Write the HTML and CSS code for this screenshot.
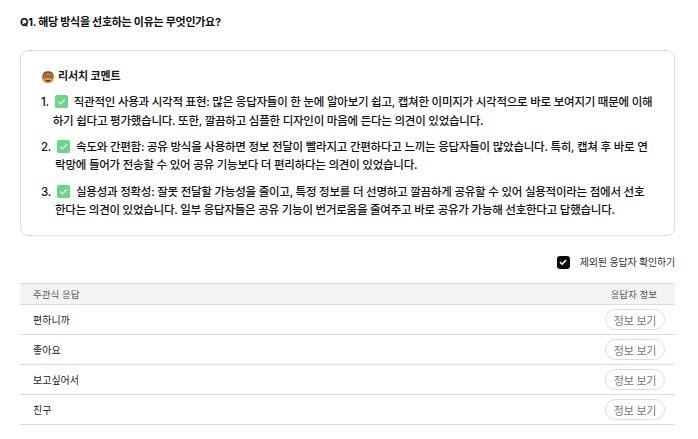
FILE: index.html
```html
<!DOCTYPE html>
<html lang="ko">
<head>
<meta charset="utf-8">
<title>리서치 코멘트</title>
<link rel="stylesheet" href="styles.css">
</head>
<body>
<main class="page">
  <h2 class="question">Q1. 해당 방식을 선호하는 이유는 무엇인가요?</h2>
  <section class="card">
    <h3 class="card-title">
      <svg class="face" viewBox="0 0 16 16" width="14" height="14" aria-hidden="true">
        <circle cx="8" cy="8.5" r="7" fill="#ee9f3e"/>
        <path d="M2 5 Q3 1.5 8 1.5 Q13 1.5 14 5 L12 3.8 H4 Z" fill="#7a5228"/>
        <circle cx="4.8" cy="7" r="2.4" fill="#f6e7cf" stroke="#33261a" stroke-width="1"/>
        <circle cx="11.2" cy="7" r="2.4" fill="#f6e7cf" stroke="#33261a" stroke-width="1"/>
        <path d="M7.2 7 H8.8" stroke="#33261a" stroke-width="1"/>
        <circle cx="4.8" cy="7" r="1" fill="#222"/>
        <circle cx="11.2" cy="7" r="1" fill="#222"/>
        <path d="M4 12.6 Q8 10 12 12.6 Q8 14.2 4 12.6 Z" fill="#4d2f17"/>
      </svg>
      리서치 코멘트
    </h3>
    <ol class="comments">
      <li><span class="num">1.</span><div class="text"><svg class="check" viewBox="0 0 14 14" width="13" height="13" aria-hidden="true"><rect width="14" height="14" rx="2" fill="#6ad68a"/><path d="M3.5 7.2 L6 9.6 L10.5 4.8" fill="none" stroke="#fff" stroke-width="1.3"/></svg>직관적인 사용과 시각적 표현: 많은 응답자들이 한 눈에 알아보기 쉽고, 캡쳐한 이미지가 시각적으로 바로 보여지기 때문에 이해하기 쉽다고 평가했습니다. 또한, 깔끔하고 심플한 디자인이 마음에 든다는 의견이 있었습니다.</div></li>
      <li><span class="num">2.</span><div class="text"><svg class="check" viewBox="0 0 14 14" width="13" height="13" aria-hidden="true"><rect width="14" height="14" rx="2" fill="#6ad68a"/><path d="M3.5 7.2 L6 9.6 L10.5 4.8" fill="none" stroke="#fff" stroke-width="1.3"/></svg>속도와 간편함: 공유 방식을 사용하면 정보 전달이 빨라지고 간편하다고 느끼는 응답자들이 많았습니다. 특히, 캡쳐 후 바로 연락망에 들어가 전송할 수 있어 공유 기능보다 더 편리하다는 의견이 있었습니다.</div></li>
      <li><span class="num">3.</span><div class="text"><svg class="check" viewBox="0 0 14 14" width="13" height="13" aria-hidden="true"><rect width="14" height="14" rx="2" fill="#6ad68a"/><path d="M3.5 7.2 L6 9.6 L10.5 4.8" fill="none" stroke="#fff" stroke-width="1.3"/></svg>실용성과 정확성: 잘못 전달할 가능성을 줄이고, 특정 정보를 더 선명하고 깔끔하게 공유할 수 있어 실용적이라는 점에서 선호한다는 의견이 있었습니다. 일부 응답자들은 공유 기능이 번거로움을 줄여주고 바로 공유가 가능해 선호한다고 답했습니다.</div></li>
    </ol>
  </section>
  <label class="exclude">
    <span class="box"><svg viewBox="0 0 12 12" width="12" height="12" aria-hidden="true"><path d="M3 6.2 L5.2 8.2 L9 4" fill="none" stroke="#fff" stroke-width="1.6"/></svg></span>
    제외된 응답자 확인하기
  </label>
  <div class="table">
    <div class="row head"><span>주관식 응답</span><span class="head-info">응답자 정보</span></div>
    <div class="row"><span>편하니까</span><button class="info">정보 보기</button></div>
    <div class="row"><span>좋아요</span><button class="info">정보 보기</button></div>
    <div class="row"><span>보고싶어서</span><button class="info">정보 보기</button></div>
    <div class="row"><span>친구</span><button class="info">정보 보기</button></div>
  </div>
</main>
</body>
</html>
```
FILE: styles.css
```css
* { box-sizing: border-box; }
html, body { margin: 0; padding: 0; background: #fff; }
body {
  font-family: Inter, "Noto Sans CJK KR", sans-serif;
  color: #1a1a1a;
  height: 439px;
  overflow: hidden;
}
.page { width: 655px; margin-left: 20px; padding-top: 14px; }
.question { margin: 0 0 20px; font-size: 11px; line-height: 16px; font-weight: 700; color: #111; letter-spacing: -0.27px; }
.card {
  border: 1px solid #dedede;
  border-radius: 8px;
  padding: 18px 20px 14px;
  height: 186px;
}
.card-title {
  margin: 0 0 9px;
  font-size: 11px;
  line-height: 15px;
  font-weight: 700;
  display: flex;
  align-items: center;
  gap: 3px;
  letter-spacing: -0.1px;
}
.comments { margin: 0; padding: 0; list-style: none; font-size: 11.5px; line-height: 18.5px; font-weight: 500; color: #111; letter-spacing: -0.245px; }
.comments li { display: flex; gap: 4px; margin-bottom: 7.9px; }
.num { flex: none; }
.text { flex: 1; min-width: 0; }
.check { vertical-align: -2px; margin: 0 6px 0 2px; }
.exclude {
  display: flex;
  justify-content: flex-end;
  align-items: center;
  gap: 10px;
  margin-top: 18px;
  font-size: 10px;
  line-height: 16px;
  color: #333;
  letter-spacing: -0.2px;
}
.box {
  width: 13px; height: 13px;
  border-radius: 3px;
  background: #0b0b0b;
  display: flex; align-items: center; justify-content: center;
}
.table { margin-top: 13px; }
.row {
  display: flex;
  justify-content: space-between;
  align-items: center;
  height: 30px;
  padding: 0 10px 0 13px;
  border-bottom: 1px solid #dcdcdc;
  font-size: 10px;
  color: #222;
}
.row.head {
  height: 22px;
  background: #f3f4f6;
  border-top: 1px solid #dcdcdc;
  color: #555;
  font-size: 9.5px;
}
.head-info { margin-right: 8px; }
.info {
  width: 60px; height: 21px;
  border: 1px solid #dcdcdc;
  border-radius: 11px;
  background: #fff;
  color: #777;
  font: inherit;
  font-size: 11px;
  letter-spacing: -0.25px;
  padding: 0;
}
```
